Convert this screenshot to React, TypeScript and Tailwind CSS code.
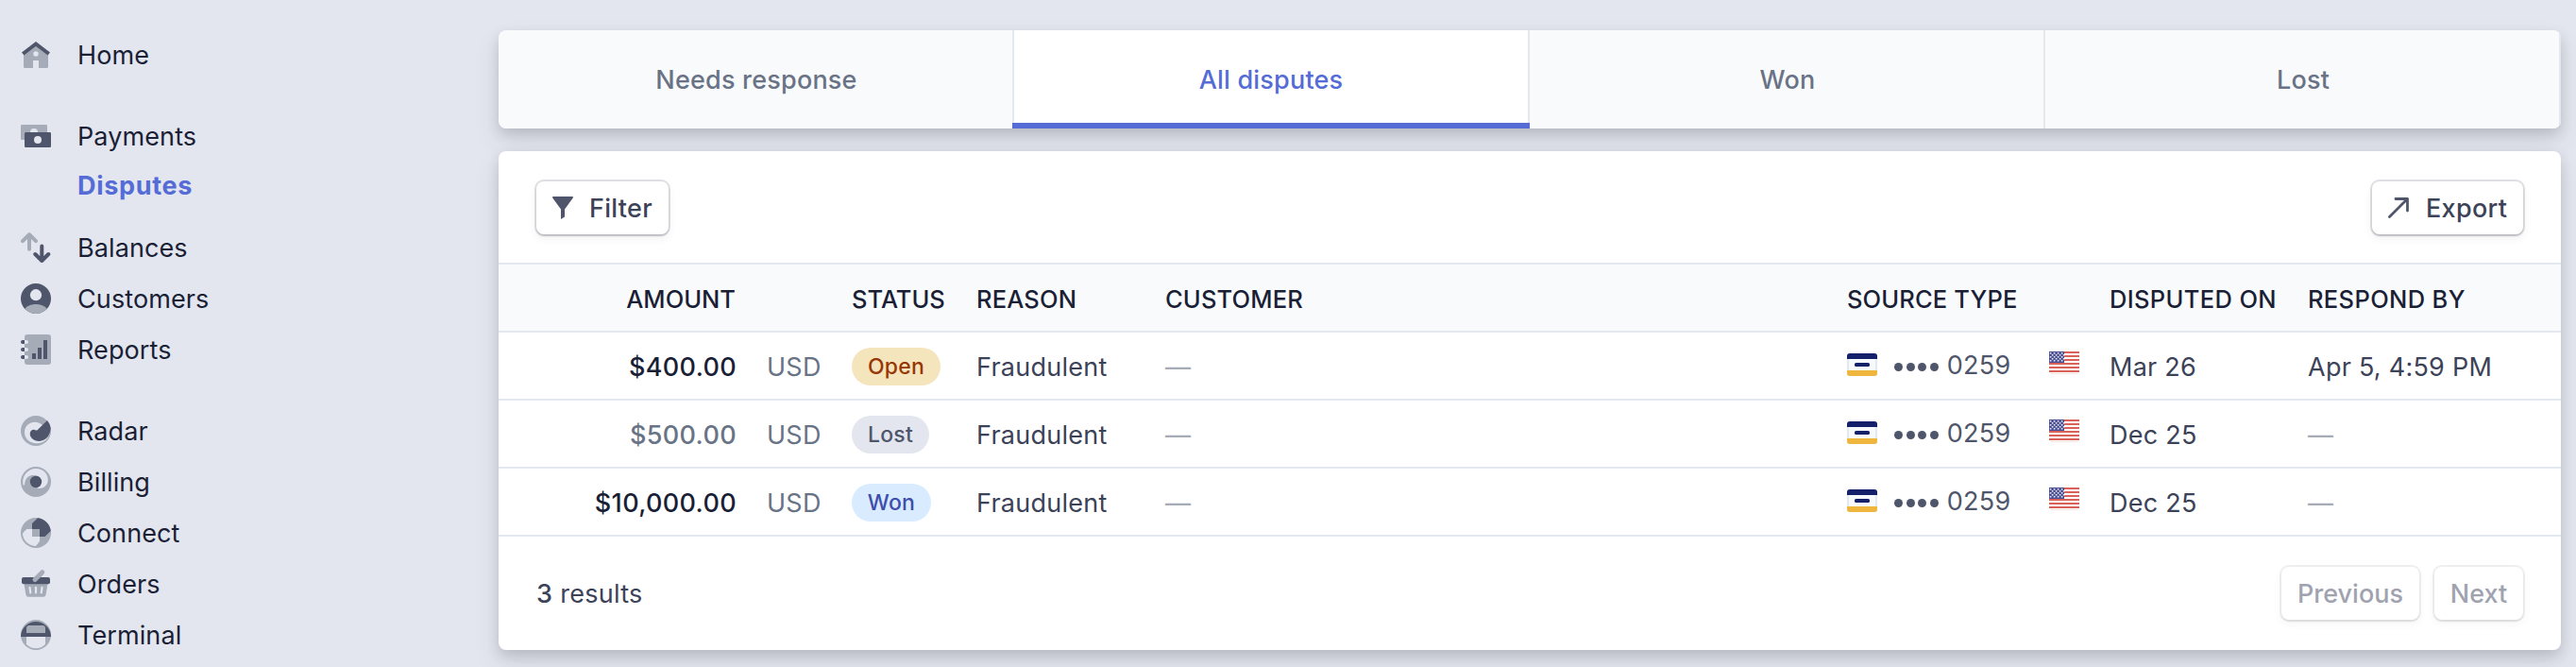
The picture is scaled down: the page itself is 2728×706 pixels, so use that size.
import React from "react";

type IconName =
  | "home" | "payments" | "balances" | "customers" | "reports"
  | "radar" | "billing" | "connect" | "orders" | "terminal";

const D = "#4f566b";
const L = "#a5acb8";
const BG = "#e3e6ee";

function NavIcon({ name }: { name: IconName }) {
  const shapes: Record<IconName, React.ReactNode> = {
    home: (
      <>
        <path fill={L} d="M3 15 16 6l13 9v13.500a1.500 1.500 0 0 1-1.500 1.500H19v-8h-6v8H4.500A1.500 1.500 0 0 1 3 28.500z" />
        <circle cx="16" cy="15" r="2.700" fill={BG} />
        <path fill="none" stroke={D} strokeWidth="4" strokeLinejoin="miter" d="M2.200 15 16 4.500 29.800 15" />
      </>
    ),
    payments: (
      <>
        <path fill={L} d="M1.300 4h25.400A1.300 1.300 0 0 1 28 5.300V12H4v8H1.300A1.300 1.300 0 0 1 0 18.700V5.300A1.300 1.300 0 0 1 1.300 4z" />
        <path fill={BG} d="M10 12a4 4 0 0 1 8 0z" />
        <rect x="4" y="12" width="28" height="16" rx="1.300" fill={D} />
        <circle cx="18" cy="20" r="4" fill={BG} />
      </>
    ),
    balances: (
      <g fill="none" strokeWidth="4" strokeLinecap="round" strokeLinejoin="round">
        <path stroke={L} d="M9 17.700V3M2 9.200l7-7 7 7" />
        <path stroke={D} d="M22.300 14.500V29M15.300 23l7 7 7-7" />
      </g>
    ),
    customers: (
      <>
        <circle cx="16" cy="16" r="16" fill={D} />
        <path fill={L} d="M4.700 27.300v-1C8 23.300 11.500 22 16 22s8 1.300 11.300 4.300v1A16 16 0 0 1 4.700 27.300z" />
        <circle cx="16" cy="12.200" r="6.100" fill={BG} />
      </>
    ),
    reports: (
      <>
        <rect x="4" y="0" width="28" height="32" rx="3" fill={L} />
        {[8, 16, 24].map((y) => (
          <g key={y}>
            <path fill={D} d={`M2 ${y - 2}h2v4H2a2 2 0 0 1 0-4z`} />
            <path fill={BG} d={`M4 ${y - 2}h2a2 2 0 0 1 0 4H4z`} />
          </g>
        ))}
        <path fill={D} d="M12 20h4v6h-4zM18 14h4v12h-4zM24 6h4v20h-4z" />
      </>
    ),
    radar: (
      <>
        <circle cx="16" cy="16" r="16" fill={L} />
        <path fill={BG} d="M4 17.500C4 11 9 6.700 15 6.700c3 0 6 1.300 8 3.300l8.400 5C31 23 25 29.300 17 29.300S4 24 4 17.500z" />
        <path fill={D} d="M28 5a15.800 15.800 0 0 1 3.700 8.300C31.300 21 26.500 26.900 19.500 26.900c-6 0-9.800-4-9.800-8 0-3.300 3.500-5.500 6.300-3.500.6.300 1 .2 1.500-.2z" />
      </>
    ),
    billing: (
      <>
        <circle cx="16" cy="16" r="16" fill={L} />
        <path fill={BG} d="M2.700 19.500A13.800 13.800 0 0 1 16 2c7.500 0 12.800 5 12.800 12 0 5-4 8.900-9 8.900h-2L16 16l4-5c-2-1.500-5-2-7-2-5 0-9 4-9 10.500z" />
        <circle cx="16" cy="16" r="6.200" fill={D} />
      </>
    ),
    connect: (
      <>
        <circle cx="16" cy="16" r="16" fill={L} />
        <path fill={BG} d="M2 17.500c0-1 .3-1.700 1-2.300L6.300 12H12v8h8v4.700L16.800 29c-.5.700-1 1-1.800 1A14 14 0 0 1 2 17.500z" />
        <path fill={D} d="M18 .2A16 16 0 0 1 31.800 14L25.500 20H20v-8h-8V6z" />
      </>
    ),
    orders: (
      <>
        <path fill={L} d="M3.500 16h25l-1.900 11.400a2.700 2.700 0 0 1-2.700 2.300H8.100a2.700 2.700 0 0 1-2.700-2.300z" />
        <rect x="1" y="9" width="30" height="7.200" rx="2" fill={D} />
        <path stroke={L} strokeWidth="5" strokeLinecap="round" d="m15 11.500 7.800-7.800" />
        <path stroke={BG} strokeWidth="2.200" strokeLinecap="round" d="m9.500 19.800.8 5.700M16 19.800v5.700M22.500 19.800l-.8 5.700" />
      </>
    ),
    terminal: (
      <>
        <circle cx="16" cy="16" r="16" fill={L} />
        <path fill={D} d="M0 18a16 16 0 1 1 32 0z" />
        <path fill={L} d="M6 14V9a3 3 0 0 1 3-3h14a3 3 0 0 1 3 3v5z" />
        <path fill={BG} d="M6 18h20v8a14 14 0 0 1-20 0z" />
      </>
    ),
  };
  return (
    <svg className="h-8 w-8 shrink-0" viewBox="0 0 32 32">
      {shapes[name]}
    </svg>
  );
}

function NavItem({ icon, label, className }: { icon: IconName; label: string; className: string }) {
  return (
    <a className={`flex h-[54px] items-center gap-7 ${className}`}>
      <NavIcon name={icon} />
      <span className="pt-0.5">{label}</span>
    </a>
  );
}

function Sidebar() {
  return (
    <nav className="flex w-[528px] shrink-0 flex-col pt-[31px] pl-[22px] text-[27px] tracking-[0.1px] text-[#1a1f36]">
      <NavItem icon="home" label="Home" className="" />
      <NavItem icon="payments" label="Payments" className="mt-8" />
      <a className="flex h-[50px] items-center pt-0.5 pl-[60px] font-bold tracking-[0.7px] text-[#556cd6]">Disputes</a>
      <NavItem icon="balances" label="Balances" className="mt-[14px]" />
      <NavItem icon="customers" label="Customers" className="" />
      <NavItem icon="reports" label="Reports" className="" />
      <NavItem icon="radar" label="Radar" className="mt-8" />
      <NavItem icon="billing" label="Billing" className="" />
      <NavItem icon="connect" label="Connect" className="" />
      <NavItem icon="orders" label="Orders" className="" />
      <NavItem icon="terminal" label="Terminal" className="" />
    </nav>
  );
}

const CARD_SHADOW = "shadow-[0_14px_28px_rgba(60,66,87,0.10),0_6px_14px_rgba(0,0,0,0.14)]";

function Tabs() {
  const base = "flex w-1/4 shrink-0 items-center justify-center border-r-2 border-[#e3e8ee] bg-[#f9fafc] pt-px pl-0.5 text-[#697386]";
  return (
    <div className={`flex h-[104px] overflow-hidden rounded-lg text-[27px] font-medium tracking-[0.2px] ${CARD_SHADOW}`}>
      <div className={base}>Needs response</div>
      <div className="relative flex w-1/4 shrink-0 items-center justify-center border-r-2 border-[#e3e8ee] bg-white pt-px text-[#556cd6]">
        All disputes
        <span className="absolute -right-0.5 bottom-0 -left-0.5 h-1.5 bg-[#556cd6]" />
      </div>
      <div className={base}>Won</div>
      <div className={base}>Lost</div>
    </div>
  );
}

const BUTTON =
  "flex h-14 items-center rounded-lg bg-white font-medium tracking-[0.3px] shadow-[0_0_0_2px_rgba(60,66,87,0.16),0_2px_2px_rgba(0,0,0,0.12),0_4px_10px_rgba(60,66,87,0.08)]";
const BUTTON_OFF =
  "flex h-14 items-center justify-center rounded-lg bg-white pt-px font-medium text-[#a0a3af] shadow-[0_0_0_2px_rgba(60,66,87,0.08),0_2px_2px_rgba(0,0,0,0.06),0_4px_10px_rgba(60,66,87,0.05)]";

function SourceCard() {
  return (
    <svg className="h-6 w-8 shrink-0" viewBox="0 0 32 24">
      <rect width="32" height="24" rx="3" fill="#e3e8ee" />
      <rect x="2" y="6" width="28" height="12" fill="#f7fafc" />
      <path fill="#15206b" d="M3 0h26a3 3 0 0 1 3 3v3H0V3a3 3 0 0 1 3-3z" />
      <path fill="#efb73e" d="M0 18h32v3a3 3 0 0 1-3 3H3a3 3 0 0 1-3-3z" />
      <rect x="8" y="10" width="16" height="4" rx="1.500" fill="#15206b" />
    </svg>
  );
}

function Flag() {
  return (
    <svg className="-mt-2 h-6 w-8 shrink-0" viewBox="0 0 32 24">
      <rect width="32" height="24" rx="2" fill="#fff" />
      {[0, 4, 8, 12, 16, 20].map((y) => (
        <rect key={y} y={y} width="32" height="2" fill="#d8625a" />
      ))}
      <rect x="1" y="23" width="30" height="1" fill="#f3e3e1" />
      <rect width="16" height="12" fill="#4a4f94" />
      {[1, 3, 5, 7, 9].map((y, i) =>
        [1, 5, 9, 13].map((x) => (
          <rect key={`${x}-${y}`} x={x + (i % 2) * 2 - 0.2} y={y} width="1.600" height="1.600" fill="#e6e6f2" />
        )),
      )}
    </svg>
  );
}

const GRID =
  "grid grid-cols-[251px_33px_90px_132px_200px_722px_214px_64px_210px_1fr] items-center";

interface Row {
  amount: string;
  amountColor: string;
  status: string;
  pill: string;
  disputed: string;
  respond: string;
}

const ROWS: Row[] = [
  { amount: "$400.00", amountColor: "text-[#1a1f36]", status: "Open", pill: "w-[94px] bg-[#f5e5bd] text-[#983705]", disputed: "Mar 26", respond: "Apr 5, 4:59 PM" },
  { amount: "$500.00", amountColor: "text-[#697386]", status: "Lost", pill: "w-[82px] bg-[#e3e6ee] text-[#4f566b]", disputed: "Dec 25", respond: "" },
  { amount: "$10,000.00", amountColor: "text-[#1a1f36]", status: "Won", pill: "w-[84px] bg-[#d9ebff] text-[#3d4eac]", disputed: "Dec 25", respond: "" },
];

function TableRow({ row }: { row: Row }) {
  return (
    <div className={`${GRID} h-[72px] border-b-2 border-[#e3e8ee] pt-0.5 text-[27px] tracking-[0.25px] text-[#3c4257]`}>
      <span className={`-mr-px pt-0.5 text-right font-medium tracking-[0.35px] ${row.amountColor}`}>{row.amount}</span>
      <span />
      <span className="pt-0.5 text-[#697386]">USD</span>
      <span className={`flex h-10 items-center justify-center rounded-full text-[23px] font-medium ${row.pill}`}>{row.status}</span>
      <span className="pt-0.5">Fraudulent</span>
      <span className="pt-0.5 text-[#a5acb8]">—</span>
      <span className="-mt-1 flex items-center text-[#4f566b]">
        <SourceCard />
        <span className="ml-[18px] flex gap-[3.600px] pt-1">
          {[0, 1, 2, 3].map((i) => (
            <i key={i} className="h-[9px] w-[9px] rounded-full bg-[#4f566b]" />
          ))}
        </span>
        <span className="ml-[9px] pt-0.5">0259</span>
      </span>
      <Flag />
      <span className="pt-0.5">{row.disputed}</span>
      {row.respond ? <span className="pt-0.5">{row.respond}</span> : <span className="pt-0.5 text-[#a5acb8]">—</span>}
    </div>
  );
}

export default function App() {
  return (
    <div className="flex h-[706px] w-[2728px] overflow-hidden bg-[#e3e6ee] font-['Inter',sans-serif] leading-10">
      <Sidebar />
      <main className="flex w-[2184px] flex-col gap-6 pt-8">
        <Tabs />
        <section className={`h-[528px] rounded-lg bg-white text-[27px] text-[#3c4257] ${CARD_SHADOW}`}>
          <div className="flex h-[118px] items-center justify-between px-10 pt-0.5">
            <button className={`${BUTTON} w-[140px] gap-[17px] pl-[17px]`}>
              <svg className="h-6 w-[22px]" viewBox="0 0 22 24">
                <path fill="#4f566b" d="M1 0h20a1 1 0 0 1 .8 1.500L13 13.500v8L9 24V13.500L.2 1.500A1 1 0 0 1 1 0z" />
              </svg>
              <span className="pt-px">Filter</span>
            </button>
            <button className={`${BUTTON} w-[160px] gap-[18px] pl-[17px]`}>
              <svg className="h-[22px] w-[22px]" viewBox="0 0 22 22" fill="none" stroke="#4f566b" strokeWidth="2.800" strokeLinecap="round" strokeLinejoin="round">
                <path d="M1.500 20.500 20.500 1.500M8 1.500h12.500V14" />
              </svg>
              <span className="pt-px">Export</span>
            </button>
          </div>
          <div className={`${GRID} h-[74px] border-y-2 border-[#e3e8ee] bg-[#f9fafc] pt-[3px] text-[25.500px] font-medium tracking-[0.15px] text-[#1a1f36]`}>
            <span className="text-right tracking-[0px]">AMOUNT</span>
            <span />
            <span />
            <span className="tracking-[0px]">STATUS</span>
            <span>REASON</span>
            <span>CUSTOMER</span>
            <span>SOURCE TYPE</span>
            <span />
            <span className="tracking-[0.35px]">DISPUTED ON</span>
            <span className="tracking-[0.35px]">RESPOND BY</span>
          </div>
          {ROWS.map((row) => (
            <TableRow key={row.amount} row={row} />
          ))}
          <div className="flex h-[120px] items-center justify-between px-10">
            <span className="pt-0.5 tracking-[0.3px]"><span className="font-medium">3</span> results</span>
            <div className="flex gap-4">
              <button className={`${BUTTON_OFF} w-[146px]`}>Previous</button>
              <button className={`${BUTTON_OFF} w-[94px]`}>Next</button>
            </div>
          </div>
        </section>
      </main>
    </div>
  );
}
